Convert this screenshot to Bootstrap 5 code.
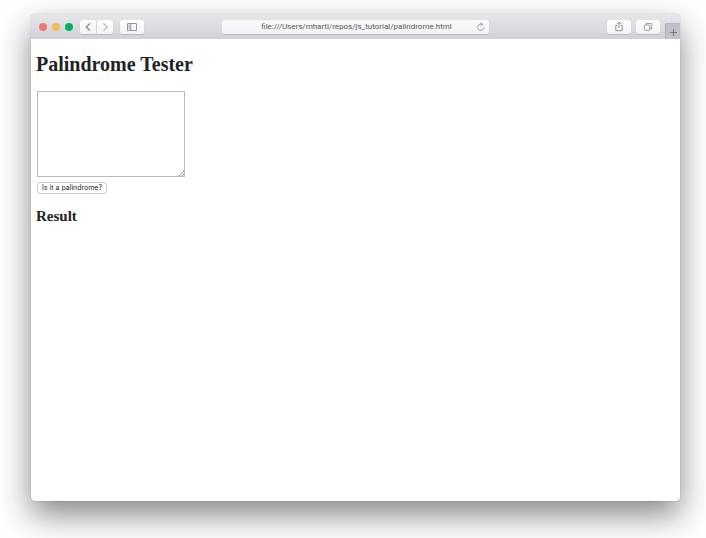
<!DOCTYPE html>
<html lang="en">
<head>
<meta charset="utf-8">
<meta name="viewport" content="width=device-width, initial-scale=1">
<title>Palindrome Tester</title>
<link href="https://cdn.jsdelivr.net/npm/bootstrap@5.3.0/dist/css/bootstrap.min.css" rel="stylesheet">
<style>
body { padding: 14px 26px 37px 31px; background: #fff; overflow: hidden; }
.browser { border-radius: 4px; background: #fff; box-shadow: 0 0 1px rgba(0,0,0,.45), 0 14px 32px rgba(20,24,34,.52); }
.toolbar { height: 25px; border-radius: 4px 4px 0 0; background: linear-gradient(#e6e7ea, #d1d2d8); font-family: Roboto, "Liberation Sans", sans-serif; }
.side { flex: 1 1 0; height: 25px; }
.lights { gap: 5px; }
.dot { width: 8px; height: 8px; border-radius: 50%; }
.dot-close { background: #ee796f; }
.dot-min { background: #f4bd5c; }
.dot-max { background: #06b25a; }
.tools-start { gap: 7px; }
.tools-end { gap: 5px; }
.tool { height: 14px; width: 24px; padding: 0; border: 0; border-radius: 3px; background: linear-gradient(#fdfdfd, #f4f4f6); box-shadow: 0 1px 1px rgba(0,0,0,.14); color: #777b80; }
.tool svg { display: block; margin: auto; }
.tool-nav { width: 16px; }
.tool-back { border-radius: 3px 0 0 3px; }
.tool-next { border-radius: 0 3px 3px 0; color: #b5b7bb; }
.nav-pair { gap: 1px; }
.address { width: 41%; height: 14px; border-radius: 3px; background: linear-gradient(#fafafb, #f3f3f5); box-shadow: 0 1px 1px rgba(0,0,0,.14); }
.address input { min-width: 0; height: 14px; padding: 0; border: 0; background: none; color: #53585d; font-size: 8px; line-height: 14px; text-align: center; outline: 0; }
.address button { width: 14px; padding: 0; border: 0; background: none; color: #888c91; }
.newtab { width: 15px; height: 16px; padding: 0; border: 0; border-left: 1px solid #aeb0b8; border-top: 1px solid #b6b8bf; background: #bfc1c9; color: #777a81; }
.document { padding: 13px 5px 0; color: #212325; font-family: "Liberation Serif", serif; }
.document h1 { margin: 0 0 15px; font-size: 20px; line-height: 24px; font-weight: 700; }
.document h2 { margin: 13px 0 0; font-size: 15px; line-height: 18px; font-weight: 700; }
.entry { width: 148px; height: 86px; margin: 0 1px 5px; padding: 1px; border: 1px solid #b8babc; font: 9px "Liberation Mono", monospace; }
.entry::-webkit-resizer { background: linear-gradient(135deg, transparent 82%, #999 82% 86%, transparent 86% 92%, #999 92% 96%, transparent 96%); }
.check { height: 12px; margin-left: 1px; padding: 0 4px; border: 1px solid #c8cbce; border-radius: 3px; background: #fff; color: #222; font: 7px/10px Inter, "Liberation Sans", sans-serif; }
</style>
<script src="https://cdn.jsdelivr.net/npm/bootstrap@5.3.0/dist/js/bootstrap.bundle.min.js" defer></script>
</head>
<body class="vh-100 d-flex flex-column">
<div class="browser flex-grow-1 d-flex flex-column">
  <header class="toolbar d-flex align-items-center">
    <div class="side tools-start d-flex align-items-center">
      <div class="lights d-flex ms-2">
        <span class="dot dot-close"></span><span class="dot dot-min"></span><span class="dot dot-max"></span>
      </div>
      <div class="nav-pair d-flex">
        <button type="button" class="tool tool-nav tool-back" aria-label="Back"><svg width="16" height="14" viewBox="0 0 16 14" fill="none" stroke="currentColor" stroke-width="1.1"><path d="M10 3.3 6.2 7 10 10.7"/></svg></button>
        <button type="button" class="tool tool-nav tool-next" aria-label="Forward"><svg width="16" height="14" viewBox="0 0 16 14" fill="none" stroke="currentColor" stroke-width="1.1"><path d="M6.5 3.3 10.3 7l-3.8 3.7"/></svg></button>
      </div>
      <button type="button" class="tool" aria-label="Sidebar"><svg width="24" height="14" viewBox="0 0 24 14" fill="none" stroke="currentColor" stroke-width=".8"><path d="M7.5 3.5h9v7h-9zM10.8 3.5v7M8.5 5.2h1.4M8.5 6.8h1.4M8.5 8.4h1.4"/></svg></button>
    </div>
    <div class="address d-flex">
      <input class="flex-grow-1 ps-3" type="text" aria-label="Address" value="file:///Users/mhartl/repos/js_tutorial/palindrome.html">
      <button type="button" aria-label="Reload"><svg class="d-block" width="12" height="14" viewBox="0 0 12 14" fill="none" stroke="currentColor" stroke-width=".8"><path d="M7.6 4.6A3.2 3.2 0 1 0 9 7.2M5.3 2.6l2.2 1.7-2 1.8"/></svg></button>
    </div>
    <div class="side tools-end d-flex align-items-center justify-content-end">
      <button type="button" class="tool" aria-label="Share"><svg width="24" height="14" viewBox="0 0 24 14" fill="none" stroke="currentColor" stroke-width=".8"><path d="M10.3 5.3H8.8v5.4h6.4V5.3h-1.5M12 8.3V2M10 4l2-2 2 2"/></svg></button>
      <button type="button" class="tool" aria-label="Show tabs"><svg width="24" height="14" viewBox="0 0 24 14" fill="none" stroke="currentColor" stroke-width=".7"><rect x="8.3" y="5" width="5.4" height="5.4" rx="1"/><path d="M10 5V3.5h5.7v5.3h-2"/></svg></button>
      <button type="button" class="newtab align-self-end" aria-label="New tab"><svg class="d-block mx-auto" width="13" height="14" viewBox="0 0 13 14" stroke="currentColor"><path d="M3 7.5h7M6.5 4v7"/></svg></button>
    </div>
  </header>
  <main class="document">
    <h1>Palindrome Tester</h1>
    <form>
      <textarea class="entry d-block" aria-label="Phrase"></textarea>
      <button type="button" class="check d-block">Is it a palindrome?</button>
    </form>
    <h2>Result</h2>
  </main>
</div>
</body>
</html>
